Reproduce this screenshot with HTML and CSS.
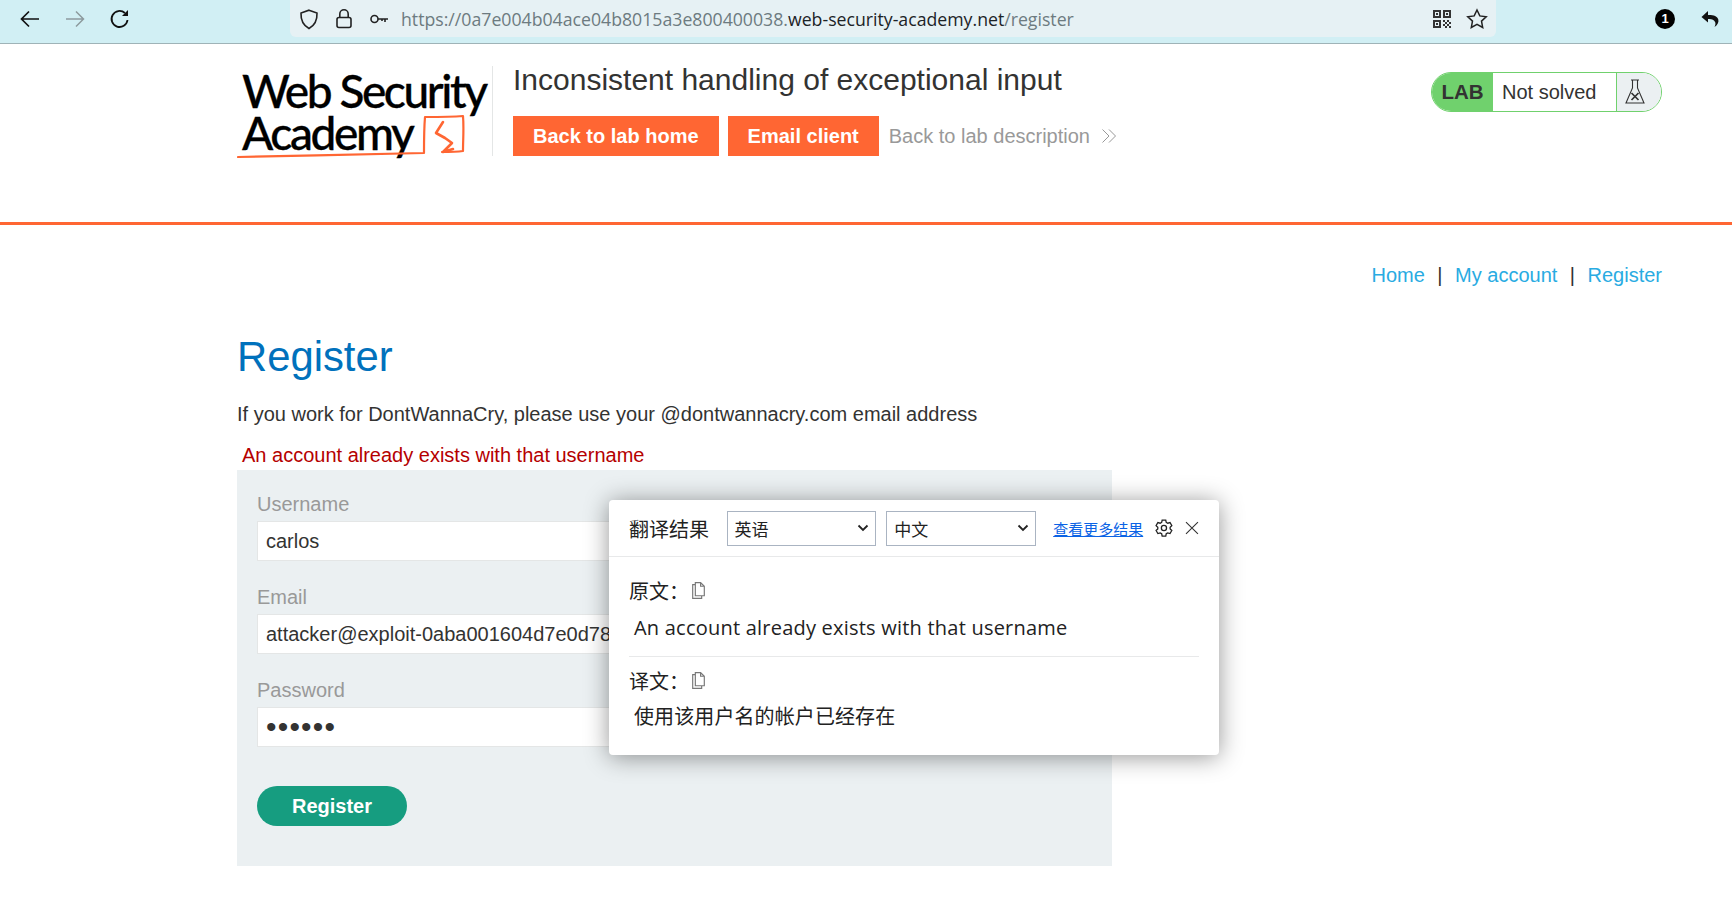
FILE: index.html
```html
<!DOCTYPE html>
<html lang="en">
<head>
<meta charset="utf-8">
<title>Register</title>
<link rel="stylesheet" href="styles.css">
</head>
<body>
<div class="browserbar">
  <div class="nav-icons">
    <svg class="ico" width="24" height="24" viewBox="0 0 24 24" fill="none" stroke="#111" stroke-width="1.7"><path d="M21 12H4M11 4.500 3.500 12l7.500 7.500"/></svg>
    <svg class="ico" width="24" height="24" viewBox="0 0 24 24" fill="none" stroke="#8d9a9e" stroke-width="1.5"><path d="M3 12h17M13 4.500l7.500 7.500-7.500 7.500"/></svg>
    <svg class="ico" width="24" height="24" viewBox="0 0 24 24" fill="none" stroke="#111" stroke-width="1.8"><path d="M19.500 13a8 8 0 1 1-2.600-7"/><path d="M20 3v6h-6z" fill="#111" stroke="none"/></svg>
  </div>
  <div class="urlbox">
    <div class="url-left">
      <svg width="22" height="24" viewBox="0 0 22 24" fill="none" stroke="#222" stroke-width="1.6"><path d="M11 3.200 19 6c.3 7-1.500 12-8 15.500C4.500 18 2.700 13 3 6z"/></svg>
      <svg class="lock" width="20" height="24" viewBox="0 0 20 24" fill="none" stroke="#222" stroke-width="1.6"><rect x="3" y="10.500" width="14" height="10" rx="2"/><path d="M5.800 10.500V7a4.200 4.200 0 0 1 8.400 0v3.500"/></svg>
      <svg class="key" width="20" height="24" viewBox="0 0 20 24" fill="none" stroke="#222" stroke-width="1.6"><circle cx="5.500" cy="12" r="3.500"/><path d="M9 12h10M16 12v3M13 12v2"/></svg>
      <div class="url"><span>https://0a7e004b04ace04b8015a3e800400038.</span><b>web-security-academy.net</b><span>/register</span></div>
    </div>
    <div class="url-right">
      <svg width="18" height="18" viewBox="0 0 18 18" fill="#333"><path fill-rule="evenodd" d="M0 0h8v8H0zM2 2v4h4V2zM3 3h2v2H3zM10 0h8v8h-8zM12 2v4h4V2zM13 3h2v2h-2zM0 10h8v8H0zM2 12v4h4v-4zM3 13h2v2H3zM10 10h2v2h-2zM14 10h2v2h-2zM12 12h2v2h-2zM16 12h2v2h-2zM10 14h2v2h-2zM14 14h2v2h-2zM12 16h2v2h-2zM16 16h2v2h-2z"/></svg>
      <svg width="22" height="22" viewBox="0 0 22 22" fill="none" stroke="#222" stroke-width="1.5"><path d="m11 2 2.800 5.900 6.400.8-4.700 4.400 1.200 6.400L11 16.300l-5.700 3.200 1.200-6.400L1.800 8.700l6.400-.8z"/></svg>
    </div>
  </div>
  <div class="ext-icons">
    <span class="badge">1</span>
    <svg width="20" height="20" viewBox="0 0 20 20" fill="#111"><path d="M8 2 1.500 8 8 13.500V10c3.500-.3 6 .6 7.200 3.200.5 1.300.2 3-.7 4.800 3-2 4.500-4.700 3.800-7.500C17.500 7 13 5.800 8 6z"/></svg>
  </div>
</div>

<header class="labhead">
  <div class="logo">
    <div class="logo-text">
      <div class="logo-line">Web Security</div>
      <div class="logo-line">Academy</div>
    </div>
    <svg class="logo-mark" width="250" height="56" viewBox="0 0 250 56" fill="none" stroke="#ff6633" stroke-linecap="round" stroke-linejoin="round"><path d="M1 52c60-1 130-3 186-4 0-12 0-24 1-36 13 0 26 0 38-1 1 12 0 24 0 35-7 1-14 1-21 1" stroke-width="2.200"/><path d="M206 17l-7 11 9 5 7 5-9 9 10-3" stroke-width="2.600"/></svg>
  </div>
  <div class="labinfo">
    <h2 class="labtitle">Inconsistent handling of exceptional input</h2>
    <div class="labactions">
      <a class="btn-orange">Back to lab home</a>
      <a class="btn-orange">Email client</a>
      <a class="backdesc">Back to lab description
        <svg width="16" height="16" viewBox="0 0 16 16" fill="none" stroke="#999" stroke-width="1"><path d="M1.500 1.500 8 8l-6.500 6.500M8 1.500 14.500 8 8 14.500"/></svg>
      </a>
    </div>
  </div>
  <div class="status">
    <span class="status-lab">LAB</span>
    <span class="status-text">Not solved</span>
    <span class="status-icon">
      <svg width="22" height="28" viewBox="0 0 22 28" fill="none" stroke="#333" stroke-width="1.100"><path d="M7 2h8M8.500 2v8L2 25h18L13.500 10V2"/><path d="m7.500 15 7 7M14.500 15l-7 7" stroke-width="1.700"/></svg>
    </span>
  </div>
</header>

<main class="content">
  <nav class="topnav">
    <a>Home</a><span class="sep">|</span><a>My account</a><span class="sep">|</span><a>Register</a>
  </nav>
  <h1 class="title">Register</h1>
  <p class="intro">If you work for DontWannaCry, please use your @dontwannacry.com email address</p>
  <p class="error">An account already exists with that username</p>
  <form class="regform">
    <label class="flabel">Username</label>
    <div class="finput">carlos</div>
    <label class="flabel">Email</label>
    <div class="finput">attacker@exploit-0aba001604d7e0d78</div>
    <label class="flabel">Password</label>
    <div class="finput dots">••••••</div>
    <button class="btn-green" type="button">Register</button>
  </form>
</main>

<aside class="popup">
  <div class="pop-head">
    <span class="pop-title">翻译结果</span>
    <span class="pop-select">英语<svg width="12" height="8" viewBox="0 0 12 8" fill="none" stroke="#222" stroke-width="1.800"><path d="m1.500 1.500 4.500 4.500 4.500-4.500"/></svg></span>
    <span class="pop-select">中文<svg width="12" height="8" viewBox="0 0 12 8" fill="none" stroke="#222" stroke-width="1.800"><path d="m1.500 1.500 4.500 4.500 4.500-4.500"/></svg></span>
    <a class="pop-more">查看更多结果</a>
    <svg class="pop-gear" width="20" height="20" viewBox="0 0 20 20" fill="none" stroke="#222" stroke-width="1.300"><path d="M8.200 2h3.600l.5 2.300 1.500.9 2.300-.7 1.800 3.100-1.700 1.600v1.700l1.700 1.600-1.800 3.100-2.300-.7-1.500.9-.5 2.300H8.200l-.5-2.300-1.500-.9-2.300.7-1.800-3.100 1.700-1.600V9.200L2.100 7.600l1.800-3.100 2.300.7 1.500-.9z"/><circle cx="10" cy="10" r="2.600"/></svg>
    <svg class="pop-close" width="14" height="14" viewBox="0 0 14 14" fill="none" stroke="#333" stroke-width="1.100"><path d="m1 1 12 12M13 1 1 13"/></svg>
  </div>
  <div class="pop-body">
    <div class="pop-label">原文：<svg width="17" height="19" viewBox="0 0 16 18" fill="none" stroke="#777" stroke-width="1.100"><path d="M5 1.500h5l3.500 3.500v9H5zM10 1.500V5h3.500M5 3.500H2.500v13h8.500v-2.500"/></svg></div>
    <div class="pop-text">An account already exists with that username</div>
    <div class="pop-rule"></div>
    <div class="pop-label">译文：<svg width="17" height="19" viewBox="0 0 16 18" fill="none" stroke="#777" stroke-width="1.100"><path d="M5 1.500h5l3.500 3.500v9H5zM10 1.500V5h3.500M5 3.500H2.500v13h8.500v-2.500"/></svg></div>
    <div class="pop-text pop-text-cn">使用该用户名的帐户已经存在</div>
  </div>
</aside>
</body>
</html>
```
FILE: styles.css
```css
* { box-sizing: border-box; }
html, body { margin: 0; padding: 0; }
body {
  position: relative;
  height: 902px;
  overflow: hidden;
  background: #fff;
  color: #333332;
  font-family: "Liberation Sans", Arial, sans-serif;
  font-size: 20px;
}
a { cursor: pointer; }

/* browser chrome */
.browserbar {
  display: flex;
  height: 44px;
  background: #d1eff4;
  border-bottom: 1px solid #9fb3b7;
}
.nav-icons { display: flex; align-items: center; gap: 21px; width: 290px; padding: 0 0 6px 18px; }
.urlbox {
  display: flex;
  justify-content: space-between;
  align-items: center;
  width: 1206px;
  height: 37px;
  padding: 0 8px 0 8px;
  background: #e6f1f4;
  border-radius: 0 0 6px 6px;
}
.url-left { display: flex; align-items: center; gap: 12px; }
.lock { margin-left: 2px; }
.key { margin-left: 3px; }
.url { font-family: "Open Sans", sans-serif; font-size: 17.700px; color: #6d7b80; white-space: nowrap; }
.url b { font-weight: 400; color: #1c2326; }
.url-right { display: flex; align-items: center; gap: 15px; }
.ext-icons { display: flex; flex: 1; align-items: center; justify-content: flex-end; gap: 25px; padding: 0 12px 6px 0; }
.badge {
  display: flex;
  align-items: center;
  justify-content: center;
  width: 20px;
  height: 20px;
  border-radius: 50%;
  background: #000;
  color: #fff;
  font-size: 13px;
  font-weight: 700;
}

/* lab header */
.labhead {
  display: flex;
  height: 181px;
  padding: 18px 70px 0 237px;
  border-bottom: 3px solid #ff6633;
}
.logo { position: relative; width: 256px; height: 90px; margin-top: 4px; border-right: 1px solid #e4e6e6; }
.logo-text { padding: 4px 0 0 5px; font-family: Lato, sans-serif; font-weight: 500; font-size: 46px; line-height: 42px; letter-spacing: -2.400px; color: #000; -webkit-text-stroke: .3px #000; }
.logo-line { white-space: nowrap; }
.logo-mark { position: absolute; left: 0; top: 39px; }
.labinfo { flex: 1; padding-left: 20px; }
.labtitle { margin: 0; font-weight: 400; font-size: 30px; line-height: 36px; color: #333332; }
.labactions { display: flex; align-items: center; gap: 9px; margin-top: 18px; }
.btn-orange { display: block; height: 40px; padding: 0 20px; background: #ff6633; color: #fff; font-weight: 700; font-size: 20px; line-height: 40px; }
.backdesc { display: flex; align-items: center; gap: 11px; margin-left: 1px; color: #999; }
.status {
  display: flex;
  align-self: flex-start;
  margin-top: 10px;
  height: 40px;
  border: 1px solid #70d16d;
  border-radius: 20px;
  overflow: hidden;
}
.status-lab { width: 61px; background: #70d16d; text-align: center; font-weight: 700; font-size: 20.500px; line-height: 38px; }
.status-text { width: 124px; padding-left: 9px; line-height: 38px; border-right: 1px solid #70d16d; }
.status-icon { display: flex; align-items: center; justify-content: center; width: 44px; padding-right: 8px; background: #ebf0f2; }

/* page */
.content { padding: 0 70px 0 237px; }
.topnav { display: flex; justify-content: flex-end; align-items: center; height: 24px; margin-top: 38px; color: #29abe2; }
.topnav a { color: #29abe2; }
.sep { margin: 0 12.500px; color: #333332; }
.title { margin: 45px 0 0; font-weight: 400; font-size: 41.800px; line-height: 50px; color: #0071bc; }
.intro { margin: 20px 0 0; line-height: 24px; }
.error { margin: 17px 0 3px; padding-left: 5px; line-height: 24px; color: #b50000; }
.regform { width: 875px; height: 396px; padding: 22px 20px 0; background: #ebf0f2; }
.flabel { display: block; height: 29px; line-height: 24px; color: #999; }
.finput { width: 835px; height: 40px; margin-bottom: 24px; padding-left: 8px; background: #fff; border: 1px solid #e4e6e6; line-height: 38px; white-space: nowrap; overflow: hidden; }
.dots { font-size: 30px; letter-spacing: 1.200px; }
.btn-green { display: block; width: 150px; height: 40px; margin-top: 39px; border: 0; border-radius: 20px; background: #169d80; color: #fff; font: 700 20px "Liberation Sans", Arial, sans-serif; }

/* translate popup */
.popup {
  position: absolute;
  left: 609px;
  top: 500px;
  width: 610px;
  height: 255px;
  background: #fff;
  border-radius: 4px;
  box-shadow: 0 2px 24px rgba(0,0,0,.42);
  font-family: "Open Sans", "Noto Sans CJK SC", sans-serif;
  color: #222;
}
.pop-head { display: flex; align-items: center; height: 57px; padding: 0 20px; border-bottom: 1px solid #e8e9ea; }
.pop-title { width: 98px; font-family: "Noto Sans CJK SC", sans-serif; font-size: 20px; }
.pop-select {
  display: flex;
  align-items: center;
  justify-content: space-between;
  width: 150.500px;
  height: 35px;
  margin-right: 10px;
  padding: 0 6px 0 7px;
  border: 1px solid #aab4c2;
  font-family: "Noto Sans CJK SC", sans-serif;
  font-size: 17px;
}
.pop-more { margin-left: 7px; width: 90px; color: #0b63e5; text-decoration: underline; font-family: "Noto Sans CJK SC", sans-serif; font-size: 15px; white-space: nowrap; }
.pop-gear { margin-left: 11px; }
.pop-close { margin-left: 11px; }
.pop-body { padding: 18px 20px 0; }
.pop-label { display: flex; align-items: center; height: 30px; font-family: "Noto Sans CJK SC", sans-serif; font-size: 20px; }
.pop-label svg { margin-left: 1px; }
.pop-text { margin-top: 5px; padding-left: 5px; height: 36px; font-size: 20px; line-height: 36px; white-space: nowrap; letter-spacing: .22px; }
.pop-text-cn { margin-top: 4px; letter-spacing: .1px; }
.pop-rule { height: 1px; margin: 10px 0 8px; background: #e8e9ea; }
```
